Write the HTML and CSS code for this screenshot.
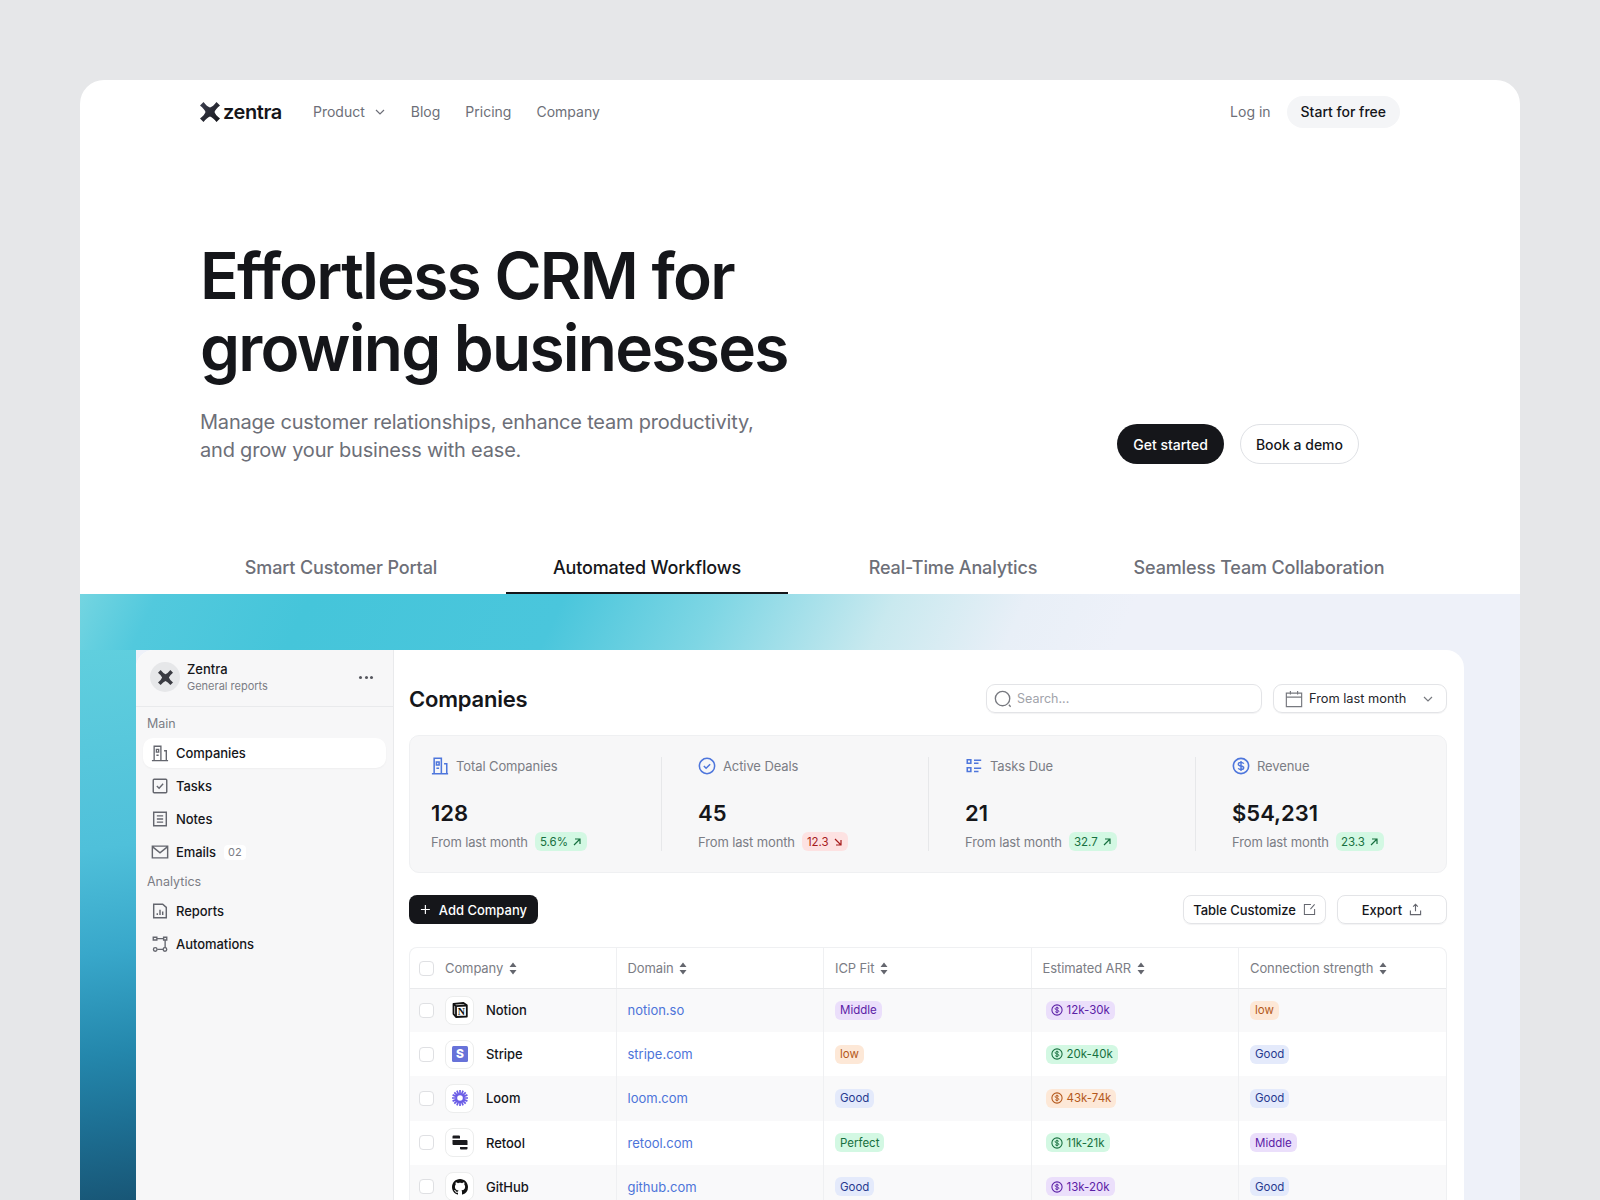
FILE: index.html
```html
<!DOCTYPE html>
<html lang="en">
<head>
  <meta charset="UTF-8">
  <title>Zentra - CRM</title>
  <link rel="stylesheet" href="styles.css">
</head>
<body>
  <svg class="defs" width="0" height="0">
    <defs>
      <linearGradient id="g-mark" x1="0" y1="0" x2="1" y2="1">
        <stop offset="0" stop-color="#3d3f50"/>
        <stop offset="1" stop-color="#15161a"/>
      </linearGradient>
      <symbol id="i-x" viewBox="0 0 20 20"><path d="M0 3.500 3.500 0Q7 4.500 10 5.500 13 4.500 16.500 0L20 3.500Q15.500 7 14.500 10 15.500 13 20 16.500L16.500 20Q13 15.500 10 14.500 7 15.500 3.500 20L0 16.500Q4.500 13 5.500 10 4.500 7 0 3.500Z"/></symbol>
      <symbol id="i-building" viewBox="0 0 20 20"><path fill="none" stroke="currentColor" stroke-width="1.500" d="M1 18.500h18M3.500 18.500V2.500h7.500v16M14.500 7.500h2.500v11M6 6h2.500v3H6zM6 12.500h2.500"/></symbol>
      <symbol id="i-check" viewBox="0 0 20 20"><rect x="2.500" y="2.500" width="15" height="15" rx="1" fill="none" stroke="currentColor" stroke-width="1.600"/><path fill="none" stroke="currentColor" stroke-width="1.500" d="M6.500 10 9 12.500l4.500-5"/></symbol>
      <symbol id="i-note" viewBox="0 0 20 20"><path fill="none" stroke="currentColor" stroke-width="1.600" d="M3 2.500h14v15H3zM6.500 6.500h7M6.500 10h7M6.500 13.500h7"/></symbol>
      <symbol id="i-mail" viewBox="0 0 20 20"><path fill="none" stroke="currentColor" stroke-width="1.600" d="M1.500 3.500h17v13h-17zM1.500 4l8.500 7 8.500-7"/></symbol>
      <symbol id="i-report" viewBox="0 0 20 20"><path fill="none" stroke="currentColor" stroke-width="1.600" d="M3 2.500H13L17 6v11.500H3zM7 14.500v-2M10 14.500V8.500M13 14.500v-4"/></symbol>
      <symbol id="i-flow" viewBox="0 0 20 20"><path fill="none" stroke="currentColor" stroke-width="1.500" d="M2.500 2.500h4v3h-4zM14 2.500h3.500v3H14zM6.500 4h7.500M15.700 5.500v9M7 16h6.500"/><circle cx="4.700" cy="16" r="2" fill="none" stroke="currentColor" stroke-width="1.500"/><circle cx="15.500" cy="16" r="2" fill="none" stroke="currentColor" stroke-width="1.500"/></symbol>
      <symbol id="i-search" viewBox="0 0 20 20"><circle cx="9.500" cy="9.500" r="8" fill="none" stroke="currentColor" stroke-width="1.500"/><path stroke="currentColor" stroke-width="1.500" d="m16.500 16.500 2 2"/></symbol>
      <symbol id="i-cal" viewBox="0 0 20 20"><path fill="none" stroke="currentColor" stroke-width="1.300" d="M1.500 3.500h17v15h-17zM1.500 8h17M6 1v4M14 1v4"/></symbol>
      <symbol id="i-chev" viewBox="0 0 12 12"><path fill="none" stroke="currentColor" stroke-width="1.200" d="m2 4 4 4 4-4"/></symbol>
      <symbol id="i-bld-blue" viewBox="0 0 20 20"><path fill="none" stroke="currentColor" stroke-width="1.700" d="M1 18.500h18M3.500 18.500V1.500h8v17M14.500 7.500h3v11M6 5.500h3v3.500H6zM6 12.500h3"/></symbol>
      <symbol id="i-circle-check" viewBox="0 0 20 20"><circle cx="10" cy="10" r="8.500" fill="none" stroke="currentColor" stroke-width="1.700"/><path fill="none" stroke="currentColor" stroke-width="1.700" d="m6.500 10 2.500 2.500 4.500-4.500"/></symbol>
      <symbol id="i-list" viewBox="0 0 20 20"><path fill="none" stroke="currentColor" stroke-width="1.700" d="M2.500 3h4v4h-4zM2.500 12h4v4h-4zM10 3.500h8M10 7h5M10 12.500h8M10 16h5"/></symbol>
      <symbol id="i-coin" viewBox="0 0 20 20"><circle cx="10" cy="10" r="8.500" fill="none" stroke="currentColor" stroke-width="1.800"/><path fill="none" stroke="currentColor" stroke-width="1.600" d="M13 7.500C12.500 6.500 11.300 6 10 6 8.300 6 7 6.800 7 8s1.200 1.700 3 2 3 .8 3 2-1.300 2-3 2c-1.300 0-2.500-.5-3-1.500M10 4.500v11"/></symbol>
      <symbol id="i-up" viewBox="0 0 10 10"><path fill="none" stroke="currentColor" stroke-width="1.200" d="M2 8 8 2M3 2h5v5"/></symbol>
      <symbol id="i-down" viewBox="0 0 10 10"><path fill="none" stroke="currentColor" stroke-width="1.200" d="M2 2l6 6M3 8h5V3"/></symbol>
      <symbol id="i-sort" viewBox="0 0 8 13"><path fill="currentColor" d="M4 .5 7.500 5H.5ZM4 12.500.5 8h7Z"/></symbol>
      <symbol id="i-edit" viewBox="0 0 14 14"><path fill="none" stroke="currentColor" stroke-width="1.100" d="M12.500 6.500v6h-11v-11h7M8 6.500 12.500 1.500"/></symbol>
      <symbol id="i-export" viewBox="0 0 14 14"><path fill="none" stroke="currentColor" stroke-width="1.200" d="M1.500 8v4.500h11V8M7 9V2M4.500 4 7 1.500 9.500 4"/></symbol>
      <symbol id="i-plus" viewBox="0 0 12 12"><path fill="none" stroke="currentColor" stroke-width="1.300" d="M6 1v10M1 6h10"/></symbol>
    </defs>
  </svg>

  <div class="shell">
    <header class="topnav">
      <div class="nav-left">
        <a class="brand" href="#"><svg class="brand-mark"><use href="#i-x"/></svg>zentra</a>
        <nav class="nav-links">
          <a href="#" class="has-caret">Product <svg class="caret"><use href="#i-chev"/></svg></a>
          <a href="#">Blog</a>
          <a href="#">Pricing</a>
          <a href="#">Company</a>
        </nav>
      </div>
      <div class="nav-right">
        <a href="#" class="login">Log in</a>
        <a href="#" class="start">Start for free</a>
      </div>
    </header>

    <section class="hero">
      <h1>Effortless CRM for<br>growing businesses</h1>
      <div class="hero-row">
        <p>Manage customer relationships, enhance team productivity,<br>and grow your business with ease.</p>
        <div class="hero-btns">
          <a href="#" class="btn-dark">Get started</a>
          <a href="#" class="btn-line">Book a demo</a>
        </div>
      </div>
    </section>

    <div class="tabs">
      <a href="#">Smart Customer Portal</a>
      <a href="#" class="active">Automated Workflows</a>
      <a href="#">Real-Time Analytics</a>
      <a href="#">Seamless Team Collaboration</a>
    </div>

    <section class="stage">
      <div class="app">
        <aside class="side">
          <div class="side-head">
            <div class="avatar"><svg><use href="#i-x"/></svg></div>
            <div class="side-org">
              <strong>Zentra</strong>
              <span>General reports</span>
            </div>
            <div class="dots"><i></i><i></i><i></i></div>
          </div>
          <div class="side-group">
            <div class="side-label">Main</div>
            <a href="#" class="side-item current"><svg><use href="#i-building"/></svg>Companies</a>
            <a href="#" class="side-item"><svg><use href="#i-check"/></svg>Tasks</a>
            <a href="#" class="side-item"><svg><use href="#i-note"/></svg>Notes</a>
            <a href="#" class="side-item"><svg><use href="#i-mail"/></svg>Emails <span class="count">02</span></a>
            <div class="side-label second">Analytics</div>
            <a href="#" class="side-item"><svg><use href="#i-report"/></svg>Reports</a>
            <a href="#" class="side-item"><svg><use href="#i-flow"/></svg>Automations</a>
          </div>
        </aside>

        <main class="main">
          <div class="main-head">
            <h2>Companies</h2>
            <div class="main-tools">
              <div class="search"><svg><use href="#i-search"/></svg>Search...</div>
              <div class="date"><svg class="cal"><use href="#i-cal"/></svg>From last month<svg class="chev"><use href="#i-chev"/></svg></div>
            </div>
          </div>

          <div class="stats">
            <div class="stat">
              <div class="stat-label"><svg><use href="#i-bld-blue"/></svg>Total Companies</div>
              <div class="stat-value">128</div>
              <div class="stat-foot">From last month <span class="pill green">5.6% <svg class="arrow"><use href="#i-up"/></svg></span></div>
            </div>
            <div class="stat">
              <div class="stat-label"><svg><use href="#i-circle-check"/></svg>Active Deals</div>
              <div class="stat-value">45</div>
              <div class="stat-foot">From last month <span class="pill red">12.3 <svg class="arrow"><use href="#i-down"/></svg></span></div>
            </div>
            <div class="stat">
              <div class="stat-label"><svg><use href="#i-list"/></svg>Tasks Due</div>
              <div class="stat-value">21</div>
              <div class="stat-foot">From last month <span class="pill green">32.7 <svg class="arrow"><use href="#i-up"/></svg></span></div>
            </div>
            <div class="stat">
              <div class="stat-label"><svg><use href="#i-coin"/></svg>Revenue</div>
              <div class="stat-value">$54,231</div>
              <div class="stat-foot">From last month <span class="pill green">23.3 <svg class="arrow"><use href="#i-up"/></svg></span></div>
            </div>
          </div>

          <div class="actions">
            <a href="#" class="add"><svg><use href="#i-plus"/></svg>Add Company</a>
            <div class="actions-right">
              <a href="#" class="ghost customize">Table Customize <svg><use href="#i-edit"/></svg></a>
              <a href="#" class="ghost export">Export <svg><use href="#i-export"/></svg></a>
            </div>
          </div>

          <div class="table-wrap">
            <table>
              <thead>
                <tr>
                  <th class="col-first"><span class="box"></span>Company <svg class="sort"><use href="#i-sort"/></svg></th>
                  <th>Domain <svg class="sort"><use href="#i-sort"/></svg></th>
                  <th>ICP Fit <svg class="sort"><use href="#i-sort"/></svg></th>
                  <th>Estimated ARR <svg class="sort"><use href="#i-sort"/></svg></th>
                  <th>Connection strength <svg class="sort"><use href="#i-sort"/></svg></th>
                </tr>
              </thead>
              <tbody>
                <tr>
                  <td><div class="co"><span class="box"></span><span class="co-logo"><svg viewBox="0 0 16 16"><path d="M1.500 1.800 11.500 1 14.800 3.200v11.300L4 15 1.500 12Z" fill="#fff" stroke="#111" stroke-width="1.800" stroke-linejoin="round"/><path d="M1.500 2 4 4.200 14.800 3.500M4 4.200V15" fill="none" stroke="#111" stroke-width="1.800"/><text class="notion-n" x="9.300" y="12.800">N</text></svg></span>Notion</div></td>
                  <td><a href="#" class="dom">notion.so</a></td>
                  <td><span class="pill purple">Middle</span></td>
                  <td><span class="pill purple priced"><svg class="coin"><use href="#i-coin"/></svg>12k-30k</span></td>
                  <td><span class="pill orange">low</span></td>
                </tr>
                <tr>
                  <td><div class="co"><span class="box"></span><span class="co-logo"><svg viewBox="0 0 16 16"><rect width="16" height="16" rx="1.500" fill="#6772d9"/><text class="stripe-s" x="8" y="12.300">S</text></svg></span>Stripe</div></td>
                  <td><a href="#" class="dom">stripe.com</a></td>
                  <td><span class="pill orange">low</span></td>
                  <td><span class="pill green priced"><svg class="coin"><use href="#i-coin"/></svg>20k-40k</span></td>
                  <td><span class="pill blue">Good</span></td>
                </tr>
                <tr>
                  <td><div class="co"><span class="box"></span><span class="co-logo"><svg viewBox="0 0 16 16"><g stroke="#6a5ce6" stroke-width="1.700"><path d="M8 0v16M0 8h16M2.300 2.300l11.400 11.400M13.700 2.300 2.300 13.700M4.900.6l6.200 14.800M11.100.6 4.900 15.400M.6 4.900l14.800 6.200M.6 11.100l14.800-6.200"/></g><circle cx="8" cy="8" r="2.800" fill="#fff"/></svg></span>Loom</div></td>
                  <td><a href="#" class="dom">loom.com</a></td>
                  <td><span class="pill blue">Good</span></td>
                  <td><span class="pill orange priced"><svg class="coin"><use href="#i-coin"/></svg>43k-74k</span></td>
                  <td><span class="pill blue">Good</span></td>
                </tr>
                <tr>
                  <td><div class="co"><span class="box"></span><span class="co-logo"><svg viewBox="0 0 16 16"><path fill="#1a1a1e" d="M.5 1.500a1 1 0 0 1 1-1h5.500a1 1 0 0 1 1 1V3.500H.5ZM.5 5h14a1 1 0 0 1 1 1v4H1.500a1 1 0 0 1-1-1ZM8 12h7.500v1.500a1 1 0 0 1-1 1H9a1 1 0 0 1-1-1Z"/></svg></span>Retool</div></td>
                  <td><a href="#" class="dom">retool.com</a></td>
                  <td><span class="pill green">Perfect</span></td>
                  <td><span class="pill green priced"><svg class="coin"><use href="#i-coin"/></svg>11k-21k</span></td>
                  <td><span class="pill purple">Middle</span></td>
                </tr>
                <tr>
                  <td><div class="co"><span class="box"></span><span class="co-logo"><svg viewBox="0 0 16 16"><path fill="#111" d="M8 0C3.580 0 0 3.580 0 8c0 3.540 2.290 6.530 5.470 7.590.4.070.55-.17.55-.38 0-.19-.010-.82-.010-1.490-2.010.37-2.530-.49-2.690-.94-.09-.23-.48-.94-.82-1.130-.28-.15-.68-.52-.010-.53.630-.010 1.080.58 1.230.82.720 1.210 1.870.87 2.330.66.070-.52.280-.87.510-1.070-1.780-.2-3.640-.89-3.640-3.950 0-.87.310-1.590.82-2.150-.08-.2-.36-1.020.08-2.120 0 0 .67-.21 2.200.82.640-.18 1.320-.27 2-.27s1.360.09 2 .27c1.530-1.040 2.200-.82 2.200-.82.440 1.100.16 1.920.08 2.120.510.56.82 1.270.82 2.150 0 3.070-1.870 3.750-3.650 3.950.29.25.54.73.54 1.480 0 1.070-.010 1.930-.010 2.200 0 .21.150.46.550.38A8.010 8.010 0 0 0 16 8c0-4.420-3.580-8-8-8Z"/></svg></span>GitHub</div></td>
                  <td><a href="#" class="dom">github.com</a></td>
                  <td><span class="pill blue">Good</span></td>
                  <td><span class="pill purple priced"><svg class="coin"><use href="#i-coin"/></svg>13k-20k</span></td>
                  <td><span class="pill blue">Good</span></td>
                </tr>
              </tbody>
            </table>
          </div>
        </main>
      </div>
    </section>
  </div>
</body>
</html>
```

FILE: styles.css
```css
* {
  box-sizing: border-box;
}

html, body {
  margin: 0;
  height: 1200px;
  overflow: hidden;
}

body {
  background: #e6e7e9;
  font-family: Inter, "Liberation Sans", sans-serif;
  color: #15161a;
}

a {
  color: inherit;
  text-decoration: none;
}

.defs {
  position: absolute;
}

.shell {
  margin: 80px 80px 0;
  height: 1120px;
  background: #fff;
  border-radius: 24px 24px 0 0;
  overflow: hidden;
}

/* top nav */
.topnav {
  display: flex;
  justify-content: space-between;
  align-items: center;
  height: 64px;
  padding: 0 120px;
}

.nav-left,
.nav-right {
  display: flex;
  align-items: center;
}

.brand {
  display: flex;
  align-items: center;
  gap: 3px;
  width: 113px;
  font-size: 20px;
  font-weight: 600;
  letter-spacing: -0.4px;
  color: #15161a;
}

.brand-mark {
  width: 20px;
  height: 20px;
  fill: url(#g-mark);
}

.nav-links {
  display: flex;
  align-items: center;
  gap: 25px;
  font-size: 14px;
  line-height: 20px;
  color: #6d6f78;
}

.has-caret {
  display: flex;
  align-items: center;
  gap: 9px;
}

.caret {
  width: 12px;
  height: 12px;
}

.login {
  font-size: 14px;
  line-height: 20px;
  color: #6d6f78;
  margin-right: 16px;
}

.start {
  display: block;
  padding: 6px 14px;
  height: 32px;
  border-radius: 16px;
  background: #f4f5f7;
  font-size: 14px;
  line-height: 20px;
  font-weight: 500;
}

/* hero */
.hero {
  padding: 96px 120px 0;
}

.hero h1 {
  margin: 0;
  font-size: 64px;
  line-height: 72px;
  font-weight: 600;
  letter-spacing: -1.750px;
  color: #15161a;
}

.hero-row {
  display: flex;
  justify-content: space-between;
  align-items: flex-end;
  margin-top: 24px;
  padding-right: 41px;
}

.hero-row p {
  margin: 0;
  font-size: 20px;
  line-height: 28px;
  letter-spacing: -0.2px;
  color: #6d6f78;
}

.hero-btns {
  display: flex;
  gap: 16px;
}

.btn-dark,
.btn-line {
  display: flex;
  align-items: center;
  height: 40px;
  padding: 0 16px;
  border-radius: 20px;
  font-size: 14px;
  font-weight: 500;
}

.btn-dark {
  background: #15161a;
  color: #fff;
}

.btn-line {
  padding: 0 15px;
  border: 1px solid #dfe1e5;
  color: #15161a;
}

/* tabs */
.tabs {
  display: grid;
  grid-template-columns: repeat(4, 282px);
  gap: 24px;
  margin: 80px 120px 0;
}

.tabs a {
  height: 50px;
  padding-top: 11px;
  text-align: center;
  font-size: 18px;
  line-height: 26px;
  font-weight: 500;
  letter-spacing: -0.15px;
  color: #6d6f78;
}

.tabs a.active {
  color: #15161a;
  border-bottom: 2px solid #15161a;
}

/* gradient area */
.stage {
  height: 606px;
  padding: 56px 56px 0;
  background:
    linear-gradient(115deg, #74d5e1 0, #52c9dd 70px, #45c5da 210px, #4ac6dc 440px, #7ed6e4 580px, #c9e9ef 740px, #e8eff7 860px, #eef1f9 960px) left top / 100% 56px no-repeat,
    linear-gradient(172deg, #60cfde 0, #4fc0da 36%, #38a7ca 55%, #2487ac 73%, #1d6f93 86%, #185676 100%) left 56px / 56px 550px no-repeat;
  background-color: #eef1f9;
}

.app {
  display: flex;
  height: 600px;
  background: #fff;
  border-radius: 18px 18px 0 0;
  overflow: hidden;
}

/* sidebar */
.side {
  width: 258px;
  flex: none;
  background: #f7f7f8;
  border-right: 1px solid #e9eaec;
}

.side-head {
  display: flex;
  align-items: center;
  height: 57px;
  padding: 0 14px 2px;
  border-bottom: 1px solid #e9eaec;
}

.avatar {
  display: flex;
  align-items: center;
  justify-content: center;
  width: 30px;
  height: 30px;
  border-radius: 50%;
  background: #e6e7e9;
}

.avatar svg {
  width: 15px;
  height: 15px;
  fill: #3a3b42;
}

.side-org {
  flex: 1;
  margin-left: 7px;
}

.side-org strong {
  display: block;
  font-size: 13px;
  line-height: 17px;
  font-weight: 500;
}

.side-org span {
  display: block;
  font-size: 11px;
  line-height: 16px;
  color: #7b7d85;
}

.dots {
  display: flex;
  gap: 2.500px;
  margin-right: 6px;
}

.dots i {
  width: 3px;
  height: 3px;
  border-radius: 50%;
  background: #55565e;
}

.side-group {
  padding: 8px 7px;
}

.side-label {
  padding: 0 4px;
  font-size: 12.500px;
  line-height: 18px;
  color: #7b7d85;
}

.side-label.second {
  margin-top: 6px;
}

.side-item {
  display: flex;
  align-items: center;
  height: 30px;
  margin-top: 3px;
  padding: 0 8px;
  border-radius: 10px;
  font-size: 13px;
  font-weight: 450;
  letter-spacing: -0.05px;
}

.side-label + .side-item {
  margin-top: 5px;
}

.side-item svg {
  width: 18px;
  height: 18px;
  margin-right: 7px;
  color: #64666e;
}

.side-item.current {
  background: #fff;
  box-shadow: 0 1px 2px rgba(20, 22, 30, 0.04);
}

.count {
  margin-left: 8px;
  padding: 0 4px;
  border-radius: 4px;
  background: #fff;
  font-size: 11px;
  line-height: 15px;
  font-weight: 400;
  color: #7b7d85;
}

/* main */
.main {
  flex: 1;
  padding: 0 17px 0 15px;
  min-width: 0;
}

.main-head {
  display: flex;
  align-items: center;
  justify-content: space-between;
  padding-top: 12px;
  height: 85px;
}

.main-head h2 {
  margin: 0;
  font-size: 22px;
  line-height: 28px;
  font-weight: 600;
  letter-spacing: -0.2px;
}

.main-tools {
  display: flex;
  gap: 11px;
}

.search,
.date {
  display: flex;
  align-items: center;
  height: 29px;
  border: 1px solid #e3e4e7;
  border-radius: 9px;
  box-shadow: 0 1px 1px rgba(20, 22, 30, 0.05);
  font-size: 12.500px;
}

.search {
  width: 276px;
  padding: 0 7px;
  color: #a1a3aa;
}

.search svg {
  width: 18px;
  height: 18px;
  margin-right: 5px;
  color: #77797f;
}

.date {
  width: 174px;
  padding: 0 12px 0 11px;
  font-size: 12.800px;
  color: #25262b;
}

.date .cal {
  width: 18px;
  height: 18px;
  margin-right: 6px;
  color: #77797f;
}

.date .chev {
  width: 12px;
  height: 12px;
  margin-left: auto;
  color: #77797f;
}

.stats {
  display: grid;
  grid-template-columns: repeat(4, 267px);
  height: 138px;
  padding: 21px 0 21px 21px;
  background: #f7f7f8;
  border: 1px solid #eff0f2;
  border-radius: 10px;
}

.stat {
  position: relative;
}

.stat + .stat::before {
  content: "";
  position: absolute;
  left: -37px;
  top: 0;
  bottom: 0;
  width: 1px;
  background: #e7e8ea;
}

.stat-label {
  display: flex;
  align-items: center;
  height: 18px;
  font-size: 13px;
  letter-spacing: -0.1px;
  color: #7b7d85;
}

.stat-label svg {
  width: 18px;
  height: 18px;
  margin-right: 7px;
  color: #4e76dc;
}

.stat-value {
  margin-top: 22px;
  font-size: 22px;
  line-height: 32px;
  font-weight: 600;
}

.stat-foot {
  display: flex;
  align-items: center;
  margin-top: 3px;
  font-size: 13px;
  letter-spacing: -0.13px;
  color: #7b7d85;
}

.stat-foot .pill {
  margin-left: 7px;
  letter-spacing: 0;
}

.pill {
  display: inline-flex;
  align-items: center;
  height: 19px;
  padding: 0 5px;
  border-radius: 6px;
  font-size: 11.500px;
}

.pill.green { background: #d3f8e3; color: #17703f; }
.pill.red { background: #fde2e2; color: #a61c1c; }
.pill.purple { background: #ebdffb; color: #5b21a6; }
.pill.orange { background: #fde8d7; color: #b4581b; }
.pill.blue { background: #e4eafb; color: #27398f; }

.pill.priced {
  margin-left: 3px;
}

.arrow {
  width: 10px;
  height: 10px;
  margin-left: 4px;
}

.coin {
  width: 12px;
  height: 12px;
  margin-right: 4px;
}

.actions {
  display: flex;
  justify-content: space-between;
  align-items: center;
  margin-top: 22px;
  height: 29px;
}

.actions-right {
  display: flex;
  gap: 11px;
}

.add {
  display: flex;
  align-items: center;
  height: 29px;
  width: 129px;
  padding: 0 11px;
  border-radius: 8px;
  background: #15161a;
  color: #fff;
  font-size: 13px;
  font-weight: 450;
  white-space: nowrap;
}

.add svg {
  width: 11px;
  height: 11px;
  margin-right: 8px;
}

.ghost {
  display: flex;
  align-items: center;
  justify-content: center;
  height: 29px;
  border: 1px solid #e3e4e7;
  border-radius: 8px;
  box-shadow: 0 1px 1px rgba(20, 22, 30, 0.05);
  font-size: 13px;
  font-weight: 450;
  letter-spacing: -0.05px;
}

.ghost svg {
  width: 13px;
  height: 13px;
  margin-left: 7px;
  color: #64666e;
}

.customize { width: 143px; }
.export { width: 110px; }

.table-wrap {
  margin-top: 23px;
  border: 1px solid #eff0f2;
  border-bottom: 0;
  border-radius: 8px 8px 0 0;
  overflow: hidden;
}

table {
  width: 100%;
  table-layout: fixed;
  border-collapse: collapse;
}

th {
  height: 40px;
  padding: 0 11px;
  border-bottom: 1px solid #e9eaec;
  border-left: 1px solid #eff0f2;
  font-size: 13px;
  font-weight: 400;
  letter-spacing: -0.1px;
  color: #7b7d85;
  text-align: left;
  white-space: nowrap;
}

.col-first {
  width: 206px;
}

th:first-child,
td:first-child {
  border-left: 0;
  padding-left: 9px;
}

th .box {
  display: inline-block;
  vertical-align: -3px;
  margin-right: 11px;
}

.sort {
  width: 8px;
  height: 13px;
  margin-left: 2px;
  vertical-align: -2px;
  color: #64666e;
}

td {
  height: 44.200px;
  padding: 0 11px;
  border-left: 1px solid #eff0f2;
  font-size: 13px;
}

tbody tr:nth-child(odd) {
  background: #f9f9fa;
}

.co {
  display: flex;
  align-items: center;
  font-weight: 450;
  letter-spacing: -0.05px;
}

.box {
  width: 15px;
  height: 15px;
  flex: none;
  background: #fff;
  border: 1px solid #dfe0e3;
  border-radius: 4px;
}

.co-logo {
  display: flex;
  align-items: center;
  justify-content: center;
  width: 29px;
  height: 29px;
  margin: 0 12px 0 11px;
  background: #fff;
  border: 1px solid #eceded;
  border-radius: 8px;
}

.co-logo svg {
  width: 16px;
  height: 16px;
}

.notion-n {
  font-family: "Liberation Serif", serif;
  font-size: 10px;
  font-weight: 700;
  text-anchor: middle;
  fill: #111;
}

.stripe-s {
  font-family: Inter, sans-serif;
  font-size: 12px;
  font-weight: 800;
  text-anchor: middle;
  fill: #fff;
}

.dom {
  color: #4c74d9;
}
```
